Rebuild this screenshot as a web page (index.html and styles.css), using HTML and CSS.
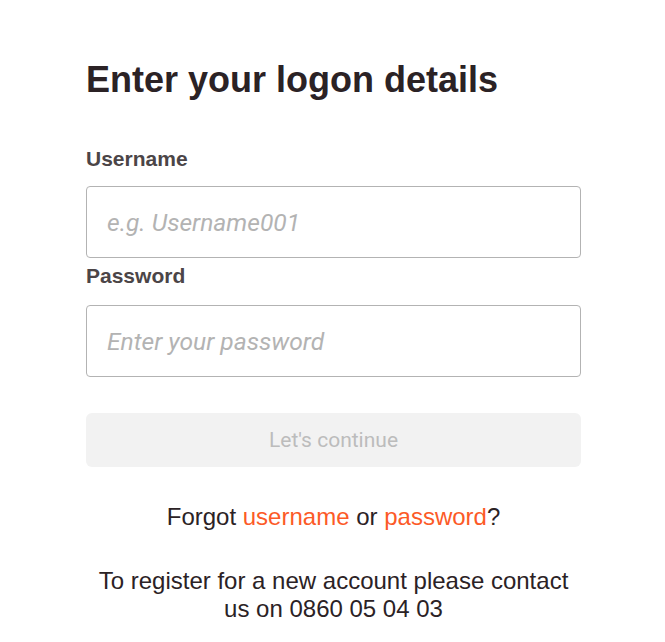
FILE: index.html
```html
<!DOCTYPE html>
<html lang="en">
<head>
<meta charset="utf-8">
<title>Enter your logon details</title>
<link rel="stylesheet" href="styles.css">
</head>
<body>
<main class="page">
  <h1 class="title">Enter your logon details</h1>
  <form class="form">
    <label class="label label-user" for="username">Username</label>
    <input class="field field-user" id="username" type="text" placeholder="e.g. Username001">
    <label class="label label-pass" for="password">Password</label>
    <input class="field field-pass" id="password" type="password" placeholder="Enter your password">
    <button class="submit" type="button" disabled>Let's continue</button>
  </form>
  <p class="forgot">Forgot <a href="#" class="link">username</a> or <a href="#" class="link">password</a>?</p>
  <p class="register">To register for a new account please contact us on 0860 05 04 03</p>
</main>
</body>
</html>
```
FILE: styles.css
```css
html, body {
  margin: 0;
  padding: 0;
  background: #ffffff;
}

body {
  font-family: "Liberation Sans", Arial, sans-serif;
  color: #2b2225;
}

.page {
  width: 495px;
  padding: 0 0 0 86px;
  display: flex;
  flex-direction: column;
}

.title {
  margin: 58px 0 45px 0;
  font-size: 36px;
  line-height: 44px;
  font-weight: 700;
  color: #2b2225;
}

.form {
  display: flex;
  flex-direction: column;
}

.label {
  font-size: 21px;
  line-height: 24px;
  font-weight: 700;
  color: #4b4547;
}

.label-user {
  margin-bottom: 15px;
}

.label-pass {
  margin-top: 6px;
  margin-bottom: 17px;
}

.field {
  box-sizing: border-box;
  width: 100%;
  height: 72px;
  margin: 0;
  padding: 0 20px;
  border: 1px solid #b3b3b3;
  border-radius: 4px;
  font-family: Roboto, "Liberation Sans", sans-serif;
  font-size: 24.6px;
  color: #2b2225;
  background: #ffffff;
  outline: none;
}

.field::placeholder {
  font-style: italic;
  color: #b3b3b3;
  opacity: 1;
}

.submit {
  box-sizing: border-box;
  width: 100%;
  height: 54px;
  margin-top: 36px;
  border: none;
  border-radius: 6px;
  background: #f2f2f2;
  font-family: Roboto, "Liberation Sans", sans-serif;
  font-size: 21px;
  color: #bcbcbc;
  padding: 0;
}

.forgot {
  margin: 36px 0 0 0;
  text-align: center;
  font-size: 24px;
  color: #2b2225;
}

.link {
  color: #fc5a27;
  text-decoration: none;
}

.register {
  margin: 36px 0 0 0;
  text-align: center;
  font-size: 24px;
  color: #2b2225;
}
```
